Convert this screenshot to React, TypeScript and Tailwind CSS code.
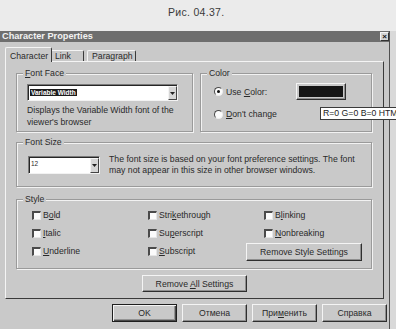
import React from "react";

const Check = () => (
  <span className="inline-block w-[9px] h-[9px] shrink-0 bg-[#fbfbfb] border-t-2 border-l-2 border-t-[#4a4a4a] border-l-[#4a4a4a] border-b border-r border-b-[#e6e6e6] border-r-[#e6e6e6]" />
);

const Radio = ({ on }: { on?: boolean }) => (
  <span className="relative inline-flex items-center justify-center w-[9px] h-[9px] shrink-0 rounded-full bg-[#fbfbfb] border border-t-[#4a4a4a] border-l-[#4a4a4a] border-b-[#eeeeee] border-r-[#eeeeee]">
    {on && <span className="w-[3px] h-[3px] rounded-full bg-[#111]" />}
  </span>
);

const Btn = ({ children, w, def }: { children: React.ReactNode; w: string; def?: boolean }) => (
  <div
    className={
      def
        ? `${w} h-[18px] flex items-center justify-center bg-[#c9c9c9] border border-[#1f1f1f] shadow-[inset_1px_1px_0_#f4f4f4,inset_-1px_-1px_0_#4a4a4a,inset_-2px_-2px_0_#949494]`
        : `${w} h-[18px] flex items-center justify-center bg-[#c9c9c9] border border-t-[#f4f4f4] border-l-[#f4f4f4] border-b-[#2e2e2e] border-r-[#2e2e2e] shadow-[inset_-1px_-1px_0_#8e8e8e]`
    }
  >
    {children}
  </div>
);

const Arrow = () => (
  <svg width="5" height="3" viewBox="0 0 5 3">
    <path d="M0 0H5L2.5 3Z" fill="#222" />
  </svg>
);

const Group = ({
  label,
  className,
  children,
}: {
  label: React.ReactNode;
  className: string;
  children: React.ReactNode;
}) => (
  <div
    className={`relative border border-[#9a9a9a] shadow-[inset_1px_1px_0_#f2f2f2,1px_1px_0_#f2f2f2] ${className}`}
  >
    <span className="absolute -top-[6px] left-[6px] px-[2px] bg-[#c9c9c9] leading-[10px]">{label}</span>
    {children}
  </div>
);

const U = ({ children }: { children: React.ReactNode }) => (
  <span className="underline underline-offset-[1px]">{children}</span>
);

export default function App() {
  return (
    <div className="relative w-[396px] h-[329px] overflow-hidden bg-[#d9d9d9] font-['Liberation_Sans',Arial,sans-serif] text-[8.7px] text-[#2a2a2a] leading-[10px]">
      <div className="h-[31px] bg-[#ebebeb] pl-[168px] pt-[7px] text-[10.5px] tracking-[0.3px] text-[#3a3a3a]">
        Рис. 04.37.
      </div>

      <div className="w-[390px] h-[298px] bg-[#c9c9c9] border-r border-[#505050] flex flex-col">
        {/* title bar */}
        <div className="h-[11px] bg-[#6e6e6e] flex items-center justify-between pl-[2px]">
          <span className="text-[9.2px] font-bold text-[#f2f2f2] leading-none">Character Properties</span>
          <span className="w-[9px] h-[9px] flex items-center justify-center bg-[#d4d4d4] border border-t-[#f5f5f5] border-l-[#f5f5f5] border-b-[#333] border-r-[#333] text-[8px] font-bold leading-none text-[#111]">
            ×
          </span>
        </div>

        {/* tabs */}
        <div className="h-[19px] pl-[5px] flex items-end">
          <div className="relative z-10 -mb-[1px] w-[47px] h-[15px] pt-[3px] pl-[4px] bg-[#c9c9c9] border-t border-l border-t-[#f4f4f4] border-l-[#f4f4f4] border-r border-r-[#3a3a3a] rounded-t-[2px]">
            Character
          </div>
          <div className="w-[32px] h-[11px] pl-[3px] border-t border-t-[#f4f4f4] border-r border-r-[#3a3a3a] rounded-tr-[2px]">
            Link
          </div>
          <div className="ml-[3px] w-[49px] h-[11px] pl-[4px] border-t border-l border-t-[#f4f4f4] border-l-[#f4f4f4] border-r border-r-[#3a3a3a] rounded-t-[2px]">
            Paragraph
          </div>
        </div>

        {/* panel */}
        <div className="ml-[5px] w-[379px] h-[238px] border border-t-[#f4f4f4] border-l-[#f4f4f4] border-r-[#3a3a3a] border-b-[#3a3a3a] pl-[10px] pt-[11px] flex flex-col">
          <div className="flex gap-[7px]">
            <Group label={<><U>F</U>ont Face</>} className="w-[177px] h-[59px] pl-[10px] pt-[10px]">
              <div className="w-[151px] h-[17px] flex bg-white border border-t-[#7a7a7a] border-l-[#7a7a7a] border-b-[#f2f2f2] border-r-[#f2f2f2] shadow-[inset_1px_1px_0_#262626]">
                <div className="flex-1 pl-[2px] pt-[2px]">
                  <span className="inline-block bg-[#1c1c1c] text-white font-bold text-[6.5px] leading-[7px] px-[1px]">
                    Variable Width
                  </span>
                </div>
                <div className="w-[9px] mt-[1px] mb-[0px] flex items-center justify-center bg-[#d6d6d6] border border-t-[#f4f4f4] border-l-[#f4f4f4] border-b-[#444] border-r-[#444]">
                  <Arrow />
                </div>
              </div>
              <div className="mt-[3px] leading-[12px]">
                Displays the Variable Width font of the
                <br />
                viewer's browser
              </div>
            </Group>

            <Group label="Color" className="w-[172px] h-[59px] pl-[13px] pt-[9px]">
              <div className="flex items-center h-[17px]">
                <div className="w-[82px] flex items-center gap-[3px]">
                  <Radio on />
                  <span>
                    Use <U>C</U>olor:
                  </span>
                </div>
                <div className="w-[50px] h-[17px] flex items-center justify-center bg-[#c9c9c9] border border-t-[#f4f4f4] border-l-[#f4f4f4] border-b-[#2e2e2e] border-r-[#2e2e2e] shadow-[inset_-1px_-1px_0_#8e8e8e]">
                  <div className="w-[44px] h-[11px] bg-[#151515]" />
                </div>
              </div>
              <div className="mt-[9px] flex items-center gap-[3px] h-[10px]">
                <Radio />
                <span>
                  <U>D</U>on't change
                </span>
              </div>
            </Group>
          </div>

          <Group label="Font Size" className="mt-[10px] w-[356px] h-[45px] pl-[11px] flex items-center">
            <div className="w-[72px] h-[18px] flex bg-white border border-t-[#7a7a7a] border-l-[#7a7a7a] border-b-[#f2f2f2] border-r-[#f2f2f2] shadow-[inset_1px_1px_0_#262626]">
              <div className="flex-1 pl-[2px] pt-[3px] text-[6.5px] leading-[7px]">12</div>
              <div className="w-[9px] mt-[1px] flex items-center justify-center bg-[#d6d6d6] border border-t-[#f4f4f4] border-l-[#f4f4f4] border-b-[#444] border-r-[#444]">
                <Arrow />
              </div>
            </div>
            <div className="ml-[9px] leading-[11px]">
              The font size is based on your font preference settings. The font
              <br />
              may not appear in this size in other browser windows.
            </div>
          </Group>

          <Group label="Style" className="mt-[12px] w-[356px] h-[70px] pl-[15px] pt-[6px]">
            <div className="grid grid-cols-[116px_116px_1fr]">
              <div className="h-[18px] flex items-center gap-[2px]">
                <Check />
                <span>
                  B<U>o</U>ld
                </span>
              </div>
              <div className="h-[18px] flex items-center gap-[2px]">
                <Check />
                <span>
                  Stri<U>k</U>ethrough
                </span>
              </div>
              <div className="h-[18px] flex items-center gap-[2px]">
                <Check />
                <span>
                  B<U>l</U>inking
                </span>
              </div>
              <div className="h-[18px] flex items-center gap-[2px]">
                <Check />
                <span>
                  <U>I</U>talic
                </span>
              </div>
              <div className="h-[18px] flex items-center gap-[2px]">
                <Check />
                <span>
                  Su<U>p</U>erscript
                </span>
              </div>
              <div className="h-[18px] flex items-center gap-[2px]">
                <Check />
                <span>
                  <U>N</U>onbreaking
                </span>
              </div>
              <div className="h-[18px] flex items-center gap-[2px]">
                <Check />
                <span>
                  <U>U</U>nderline
                </span>
              </div>
              <div className="h-[18px] flex items-center gap-[2px]">
                <Check />
                <span>
                  <U>S</U>ubscript
                </span>
              </div>
              <div className="h-[18px] -ml-[18px] pt-[1px]">
                <Btn w="w-[116px]">Remove Style Settings</Btn>
              </div>
            </div>
          </Group>

          <div className="mt-[6px] pl-[126px]">
            <div className="w-[105px] h-[17px] flex items-center justify-center bg-[#c9c9c9] border border-t-[#f4f4f4] border-l-[#f4f4f4] border-b-[#2e2e2e] border-r-[#2e2e2e] shadow-[inset_-1px_-1px_0_#8e8e8e]">
              <span>
                Remove <U>A</U>ll Settings
              </span>
            </div>
          </div>
        </div>

        {/* bottom buttons */}
        <div className="mt-[5px] flex justify-end gap-[5px] pr-[2px]">
          <Btn w="w-[65px]" def>
            OK
          </Btn>
          <Btn w="w-[65px]">Отмена</Btn>
          <Btn w="w-[65px]">
            При<U>м</U>енить
          </Btn>
          <Btn w="w-[65px]">Справка</Btn>
        </div>
      </div>

      {/* color tooltip */}
      <div className="absolute left-[320px] top-[107px] h-[13px] pl-[2px] pr-[4px] bg-white border border-[#3a3a3a] whitespace-nowrap text-[8.7px] leading-[11px] text-[#222]">
        R=0 G=0 B=0 HTML: #000000
      </div>
    </div>
  );
}
